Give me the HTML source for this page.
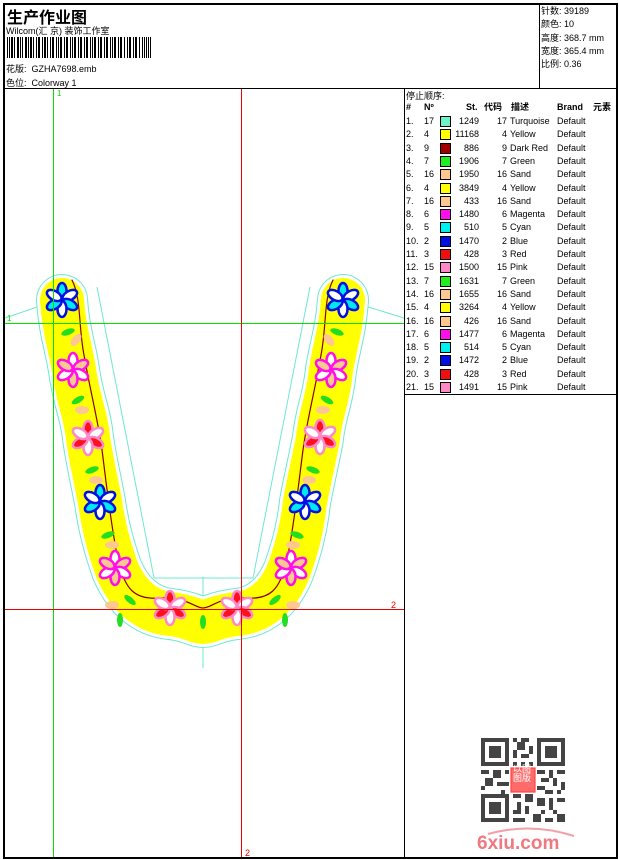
<!DOCTYPE html>
<html><head><meta charset="utf-8"><style>
body{margin:0;background:#fff;width:620px;height:860px;position:relative;overflow:hidden;font-family:"Liberation Sans","Noto Sans CJK SC",sans-serif;font-size:9px;color:#000}
.a{position:absolute;white-space:nowrap}
.ln{position:absolute;background:#000}
.r{position:absolute;height:13px;width:212px;font-size:9px;line-height:13px}
.r span{position:absolute}
.sw{width:9px;height:9px;border:1px solid #000;top:1px}
</style></head><body>
<!-- borders -->
<div class="ln" style="left:3px;top:3px;width:615px;height:2px"></div>
<div class="ln" style="left:3px;top:3px;width:2px;height:856px"></div>
<div class="ln" style="left:616px;top:3px;width:2px;height:856px"></div>
<div class="ln" style="left:3px;top:857px;width:615px;height:2px"></div>
<div class="ln" style="left:3px;top:88px;width:615px;height:1px"></div>
<div class="ln" style="left:539px;top:3px;width:1px;height:86px"></div>
<div class="ln" style="left:404px;top:88px;width:1px;height:770px"></div>
<div class="ln" style="left:404px;top:394px;width:214px;height:1px"></div>

<!-- header -->
<div class="a" style="left:7px;top:4px;font-size:16px;font-weight:bold">生产作业图</div>
<div class="a" style="left:6px;top:24px;font-size:9px">Wilcom(汇 京) 装饰工作室</div>
<svg class="a" style="left:7px;top:37px" width="145" height="21">
<g fill="#000">
<rect x="0" y="0" width="1" height="21"/><rect x="2" y="0" width="1" height="21"/><rect x="4" y="0" width="2" height="21"/><rect x="7" y="0" width="1" height="21"/><rect x="10" y="0" width="2" height="21"/><rect x="13" y="0" width="1" height="21"/><rect x="15" y="0" width="1" height="21"/><rect x="18" y="0" width="2" height="21"/><rect x="21" y="0" width="1" height="21"/><rect x="23" y="0" width="2" height="21"/><rect x="26" y="0" width="1" height="21"/><rect x="29" y="0" width="1" height="21"/><rect x="31" y="0" width="2" height="21"/><rect x="35" y="0" width="1" height="21"/><rect x="37" y="0" width="2" height="21"/><rect x="40" y="0" width="1" height="21"/><rect x="43" y="0" width="1" height="21"/><rect x="45" y="0" width="2" height="21"/><rect x="49" y="0" width="1" height="21"/><rect x="51" y="0" width="1" height="21"/><rect x="53" y="0" width="2" height="21"/><rect x="57" y="0" width="1" height="21"/><rect x="59" y="0" width="2" height="21"/><rect x="63" y="0" width="1" height="21"/><rect x="65" y="0" width="1" height="21"/><rect x="67" y="0" width="2" height="21"/><rect x="71" y="0" width="1" height="21"/><rect x="73" y="0" width="2" height="21"/><rect x="77" y="0" width="1" height="21"/><rect x="79" y="0" width="2" height="21"/><rect x="83" y="0" width="1" height="21"/><rect x="85" y="0" width="1" height="21"/><rect x="87" y="0" width="2" height="21"/><rect x="91" y="0" width="1" height="21"/><rect x="93" y="0" width="2" height="21"/><rect x="97" y="0" width="1" height="21"/><rect x="99" y="0" width="2" height="21"/><rect x="103" y="0" width="1" height="21"/><rect x="105" y="0" width="1" height="21"/><rect x="107" y="0" width="2" height="21"/><rect x="111" y="0" width="1" height="21"/><rect x="113" y="0" width="2" height="21"/><rect x="117" y="0" width="1" height="21"/><rect x="120" y="0" width="1" height="21"/><rect x="122" y="0" width="2" height="21"/><rect x="126" y="0" width="1" height="21"/><rect x="128" y="0" width="2" height="21"/><rect x="132" y="0" width="1" height="21"/><rect x="135" y="0" width="1" height="21"/><rect x="137" y="0" width="1" height="21"/><rect x="139" y="0" width="1" height="21"/><rect x="141" y="0" width="1" height="21"/><rect x="143" y="0" width="1" height="21"/>
</g></svg>
<div class="a" style="left:6px;top:62px">花版:&nbsp; GZHA7698.emb</div>
<div class="a" style="left:6px;top:76px">色位:&nbsp; Colorway 1</div>
<div class="a" style="left:541px;top:5px;line-height:13.3px">针数: 39189<br>颜色: 10<br>高度: 368.7 mm<br>宽度: 365.4 mm<br>比例: 0.36</div>

<!-- design canvas -->
<svg class="a" style="left:5px;top:89px" width="399" height="768" viewBox="5 89 399 768">
<g fill="none" stroke="#6ee8d0" stroke-width="1">
<path d="M5 318 L40 306 M97 287 L154 578 L253 578 L310 287 M365 306 L404 318"/>
<path d="M203 577 L203 668"/>
</g>
<g fill="none" stroke-linejoin="round" stroke-linecap="round">
<path d="M62 300 C64 330 70 345 74 370 C78 400 86 415 88 438 C92 465 96 480 100 502 C104 530 110 550 117 570 C130 600 150 612 170 614 C190 616 196 622 203 622 C210 622 216 616 237 614 C257 612 277 600 289 570 C296 550 302 530 305 502 C309 480 313 465 318 438 C320 415 328 400 331 370 C335 345 341 330 343 300" stroke="#6ee8d0" stroke-width="52"/>
<path d="M62 300 C64 330 70 345 74 370 C78 400 86 415 88 438 C92 465 96 480 100 502 C104 530 110 550 117 570 C130 600 150 612 170 614 C190 616 196 622 203 622 C210 622 216 616 237 614 C257 612 277 600 289 570 C296 550 302 530 305 502 C309 480 313 465 318 438 C320 415 328 400 331 370 C335 345 341 330 343 300" stroke="#fff" stroke-width="50"/>
<path d="M62 300 C64 330 70 345 74 370 C78 400 86 415 88 438 C92 465 96 480 100 502 C104 530 110 550 117 570 C130 600 150 612 170 614 C190 616 196 622 203 622 C210 622 216 616 237 614 C257 612 277 600 289 570 C296 550 302 530 305 502 C309 480 313 465 318 438 C320 415 328 400 331 370 C335 345 341 330 343 300" stroke="#ffff00" stroke-width="44"/>
<path d="M72 280 C82 300 78 330 85 360 C90 390 98 420 102 450 C106 480 110 520 118 560 C125 590 135 600 160 598 C185 596 195 608 203 608 C212 608 220 596 245 598 C270 600 280 590 287 560 C295 520 299 480 303 450 C307 420 315 390 320 360 C327 330 323 300 333 280" stroke="#8b0000" stroke-width="1.2"/>
</g>
<g fill="#22dd22">
<ellipse cx="68" cy="332" rx="7" ry="3" transform="rotate(-20 68 332)"/><ellipse cx="78" cy="400" rx="7" ry="3" transform="rotate(-30 78 400)"/><ellipse cx="92" cy="470" rx="7" ry="3" transform="rotate(-20 92 470)"/><ellipse cx="108" cy="535" rx="7" ry="3" transform="rotate(-20 108 535)"/><ellipse cx="130" cy="600" rx="7" ry="3" transform="rotate(40 130 600)"/><ellipse cx="120" cy="620" rx="3" ry="7"/><ellipse cx="203" cy="622" rx="3" ry="7"/>
<ellipse cx="337" cy="332" rx="7" ry="3" transform="rotate(20 337 332)"/><ellipse cx="327" cy="400" rx="7" ry="3" transform="rotate(30 327 400)"/><ellipse cx="313" cy="470" rx="7" ry="3" transform="rotate(20 313 470)"/><ellipse cx="297" cy="535" rx="7" ry="3" transform="rotate(20 297 535)"/><ellipse cx="275" cy="600" rx="7" ry="3" transform="rotate(-40 275 600)"/><ellipse cx="285" cy="620" rx="3" ry="7"/>
</g>
<g fill="#ffc890">
<ellipse cx="76" cy="340" rx="7" ry="4" transform="rotate(-50 76 340)"/><ellipse cx="82" cy="410" rx="7" ry="4"/><ellipse cx="96" cy="480" rx="7" ry="4"/><ellipse cx="112" cy="545" rx="7" ry="4"/><ellipse cx="112" cy="605" rx="7" ry="4"/>
<ellipse cx="329" cy="340" rx="7" ry="4" transform="rotate(50 329 340)"/><ellipse cx="323" cy="410" rx="7" ry="4"/><ellipse cx="309" cy="480" rx="7" ry="4"/><ellipse cx="293" cy="545" rx="7" ry="4"/><ellipse cx="293" cy="605" rx="7" ry="4"/>
</g>
<defs>
<g id="fb"><g stroke="#0010e0" stroke-width="2.5"><ellipse cx="0" cy="-9" rx="4.5" ry="8" fill="#00e8f0"/><ellipse cx="0" cy="-9" rx="4.5" ry="8" fill="#fff" transform="rotate(60)"/><ellipse cx="0" cy="-9" rx="4.5" ry="8" fill="#00e8f0" transform="rotate(120)"/><ellipse cx="0" cy="-9" rx="4.5" ry="8" fill="#fff" transform="rotate(180)"/><ellipse cx="0" cy="-9" rx="4.5" ry="8" fill="#00e8f0" transform="rotate(240)"/><ellipse cx="0" cy="-9" rx="4.5" ry="8" fill="#fff" transform="rotate(300)"/></g></g>
<g id="fm"><g stroke="#ff10e8" stroke-width="2.5"><ellipse cx="0" cy="-9" rx="4.5" ry="8" fill="#fff"/><ellipse cx="0" cy="-9" rx="4.5" ry="8" fill="#ffc890" transform="rotate(60)"/><ellipse cx="0" cy="-9" rx="4.5" ry="8" fill="#fff" transform="rotate(120)"/><ellipse cx="0" cy="-9" rx="4.5" ry="8" fill="#ffc890" transform="rotate(180)"/><ellipse cx="0" cy="-9" rx="4.5" ry="8" fill="#fff" transform="rotate(240)"/><ellipse cx="0" cy="-9" rx="4.5" ry="8" fill="#ffc890" transform="rotate(300)"/></g></g>
<g id="fp"><g stroke="#ff88c8" stroke-width="2.5"><ellipse cx="0" cy="-9" rx="4.5" ry="8" fill="#ff1020"/><ellipse cx="0" cy="-9" rx="4.5" ry="8" fill="#fff" transform="rotate(60)"/><ellipse cx="0" cy="-9" rx="4.5" ry="8" fill="#ff1020" transform="rotate(120)"/><ellipse cx="0" cy="-9" rx="4.5" ry="8" fill="#fff" transform="rotate(180)"/><ellipse cx="0" cy="-9" rx="4.5" ry="8" fill="#ff1020" transform="rotate(240)"/><ellipse cx="0" cy="-9" rx="4.5" ry="8" fill="#fff" transform="rotate(300)"/></g></g>
</defs>
<use href="#fb" x="62" y="300"/><use href="#fm" x="73" y="370"/><use href="#fp" x="88" y="438"/><use href="#fb" x="100" y="502"/><use href="#fm" x="115" y="568"/><use href="#fp" x="170" y="608"/>
<use href="#fb" x="343" y="300"/><use href="#fm" x="331" y="370"/><use href="#fp" x="320" y="437"/><use href="#fb" x="305" y="502"/><use href="#fm" x="291" y="568"/><use href="#fp" x="237" y="608"/>
<rect x="53" y="89" width="1" height="768" fill="#00e000"/>
<rect x="5" y="323" width="399" height="1" fill="#00e000"/>
<rect x="5" y="609" width="399" height="1" fill="#ee0000"/>
<rect x="241" y="89" width="1" height="768" fill="#ee0000"/>
<text x="57" y="96" font-size="8" fill="#00e000" font-family="Liberation Sans">1</text>
<text x="7" y="321" font-size="8" fill="#00e000" font-family="Liberation Sans">1</text>
<text x="391" y="608" font-size="9" fill="#ee0000" font-family="Liberation Sans">2</text>
<text x="245" y="856" font-size="9" fill="#ee0000" font-family="Liberation Sans">2</text>
</svg>

<!-- table -->
<div class="a" style="left:406px;top:89px">停止顺序:</div>
<div style="position:absolute;left:405px;top:101px">
<div class="r" style="top:0;font-weight:bold;text-decoration:underline">
<span style="left:1px">#</span><span style="left:19px">Nº</span><span style="left:61px">St.</span><span style="left:79px">代码</span><span style="left:106px">描述</span><span style="left:152px">Brand</span><span style="left:188px">元素</span></div>
</div>
<div style="position:absolute;left:405px;top:115px">
<div class="r" style="top:0px"><span style="left:1px">1.</span><span style="left:19px">17</span><span class="sw" style="left:35px;background:#6ff0c8"></span><span style="right:138px">1249</span><span style="right:110px">17</span><span style="left:105px">Turquoise</span><span style="left:152px">Default</span></div>
<div class="r" style="top:13.3px"><span style="left:1px">2.</span><span style="left:19px">4</span><span class="sw" style="left:35px;background:#ffff00"></span><span style="right:138px">11168</span><span style="right:110px">4</span><span style="left:105px">Yellow</span><span style="left:152px">Default</span></div>
<div class="r" style="top:26.6px"><span style="left:1px">3.</span><span style="left:19px">9</span><span class="sw" style="left:35px;background:#a00000"></span><span style="right:138px">886</span><span style="right:110px">9</span><span style="left:105px">Dark Red</span><span style="left:152px">Default</span></div>
<div class="r" style="top:39.9px"><span style="left:1px">4.</span><span style="left:19px">7</span><span class="sw" style="left:35px;background:#22ee22"></span><span style="right:138px">1906</span><span style="right:110px">7</span><span style="left:105px">Green</span><span style="left:152px">Default</span></div>
<div class="r" style="top:53.2px"><span style="left:1px">5.</span><span style="left:19px">16</span><span class="sw" style="left:35px;background:#ffc890"></span><span style="right:138px">1950</span><span style="right:110px">16</span><span style="left:105px">Sand</span><span style="left:152px">Default</span></div>
<div class="r" style="top:66.5px"><span style="left:1px">6.</span><span style="left:19px">4</span><span class="sw" style="left:35px;background:#ffff00"></span><span style="right:138px">3849</span><span style="right:110px">4</span><span style="left:105px">Yellow</span><span style="left:152px">Default</span></div>
<div class="r" style="top:79.8px"><span style="left:1px">7.</span><span style="left:19px">16</span><span class="sw" style="left:35px;background:#ffc890"></span><span style="right:138px">433</span><span style="right:110px">16</span><span style="left:105px">Sand</span><span style="left:152px">Default</span></div>
<div class="r" style="top:93.1px"><span style="left:1px">8.</span><span style="left:19px">6</span><span class="sw" style="left:35px;background:#ff10e8"></span><span style="right:138px">1480</span><span style="right:110px">6</span><span style="left:105px">Magenta</span><span style="left:152px">Default</span></div>
<div class="r" style="top:106.4px"><span style="left:1px">9.</span><span style="left:19px">5</span><span class="sw" style="left:35px;background:#00f0f0"></span><span style="right:138px">510</span><span style="right:110px">5</span><span style="left:105px">Cyan</span><span style="left:152px">Default</span></div>
<div class="r" style="top:119.7px"><span style="left:1px">10.</span><span style="left:19px">2</span><span class="sw" style="left:35px;background:#0010e0"></span><span style="right:138px">1470</span><span style="right:110px">2</span><span style="left:105px">Blue</span><span style="left:152px">Default</span></div>
<div class="r" style="top:133px"><span style="left:1px">11.</span><span style="left:19px">3</span><span class="sw" style="left:35px;background:#ee1010"></span><span style="right:138px">428</span><span style="right:110px">3</span><span style="left:105px">Red</span><span style="left:152px">Default</span></div>
<div class="r" style="top:146.3px"><span style="left:1px">12.</span><span style="left:19px">15</span><span class="sw" style="left:35px;background:#ff88c8"></span><span style="right:138px">1500</span><span style="right:110px">15</span><span style="left:105px">Pink</span><span style="left:152px">Default</span></div>
<div class="r" style="top:159.6px"><span style="left:1px">13.</span><span style="left:19px">7</span><span class="sw" style="left:35px;background:#22ee22"></span><span style="right:138px">1631</span><span style="right:110px">7</span><span style="left:105px">Green</span><span style="left:152px">Default</span></div>
<div class="r" style="top:172.9px"><span style="left:1px">14.</span><span style="left:19px">16</span><span class="sw" style="left:35px;background:#ffc890"></span><span style="right:138px">1655</span><span style="right:110px">16</span><span style="left:105px">Sand</span><span style="left:152px">Default</span></div>
<div class="r" style="top:186.2px"><span style="left:1px">15.</span><span style="left:19px">4</span><span class="sw" style="left:35px;background:#ffff00"></span><span style="right:138px">3264</span><span style="right:110px">4</span><span style="left:105px">Yellow</span><span style="left:152px">Default</span></div>
<div class="r" style="top:199.5px"><span style="left:1px">16.</span><span style="left:19px">16</span><span class="sw" style="left:35px;background:#ffc890"></span><span style="right:138px">426</span><span style="right:110px">16</span><span style="left:105px">Sand</span><span style="left:152px">Default</span></div>
<div class="r" style="top:212.8px"><span style="left:1px">17.</span><span style="left:19px">6</span><span class="sw" style="left:35px;background:#ff10e8"></span><span style="right:138px">1477</span><span style="right:110px">6</span><span style="left:105px">Magenta</span><span style="left:152px">Default</span></div>
<div class="r" style="top:226.1px"><span style="left:1px">18.</span><span style="left:19px">5</span><span class="sw" style="left:35px;background:#00f0f0"></span><span style="right:138px">514</span><span style="right:110px">5</span><span style="left:105px">Cyan</span><span style="left:152px">Default</span></div>
<div class="r" style="top:239.4px"><span style="left:1px">19.</span><span style="left:19px">2</span><span class="sw" style="left:35px;background:#0010e0"></span><span style="right:138px">1472</span><span style="right:110px">2</span><span style="left:105px">Blue</span><span style="left:152px">Default</span></div>
<div class="r" style="top:252.7px"><span style="left:1px">20.</span><span style="left:19px">3</span><span class="sw" style="left:35px;background:#ee1010"></span><span style="right:138px">428</span><span style="right:110px">3</span><span style="left:105px">Red</span><span style="left:152px">Default</span></div>
<div class="r" style="top:266px"><span style="left:1px">21.</span><span style="left:19px">15</span><span class="sw" style="left:35px;background:#ff88c8"></span><span style="right:138px">1491</span><span style="right:110px">15</span><span style="left:105px">Pink</span><span style="left:152px">Default</span></div>
</div>

<!-- QR code -->
<svg class="a" style="left:481px;top:738px" width="84" height="84" viewBox="0 0 21 21">
<g fill="#444"><path d="M0 0h7v7H0z M14 0h7v7h-7z M0 14h7v7H0z"/></g>
<g fill="#fff"><path d="M1 1h5v5H1z M15 1h5v5h-5z M1 15h5v5H1z"/></g>
<g fill="#444"><path d="M2 2h3v3H2z M16 2h3v3h-3z M2 16h3v3H2z"/>
<path d="M8 0h1v1H8z M10 0h2v1h-2z M9 1h2v2H9z M12 2h1v2h-1z M8 3h1v2H8z M10 4h2v1h-2z M8 6h1v1H8z M10 6h1v1h-1z M12 6h1v1h-1z M0 8h2v1H0z M3 8h2v2H3z M6 8h1v1H6z M1 10h2v2H1z M4 11h3v1H4z M0 12h1v1H0z M5 13h1v1H5z M14 8h2v1h-2z M17 8h1v2h-1z M19 8h2v1h-2z M15 10h2v1h-2z M18 10h1v2h-1z M20 11h1v2h-1z M14 12h2v1h-2z M16 13h2v1h-2z M19 13h1v1h-1z M8 14h2v1H8z M11 14h2v2h-2z M9 16h1v2H9z M8 18h2v1H8z M11 17h1v2h-1z M13 19h2v2h-2z M8 20h3v1H8z M14 15h2v2h-2z M17 15h1v3h-1z M19 15h2v1h-2z M15 18h1v1h-1z M18 18h1v1h-1z M19 19h2v2h-2z M16 20h2v1h-2z"/></g>
<rect x="7.5" y="7.5" width="6" height="6" fill="#ff6a6a" stroke="#ff4444" stroke-width="0.3"/>
</svg>
<div class="a" style="left:512px;top:765px;font-size:9px;color:#fff;line-height:9px;width:20px;text-align:center">以图<br>图版</div>
<svg class="a" style="left:476px;top:822px" width="100" height="30">
<path d="M12 12 Q55 0 98 14" stroke="#f3a0a8" stroke-width="2" fill="none"/>
<text x="1" y="27" font-family="Liberation Sans" font-weight="bold" font-size="19" fill="#f07880">6xiu.com</text>
</svg>
</body></html>
